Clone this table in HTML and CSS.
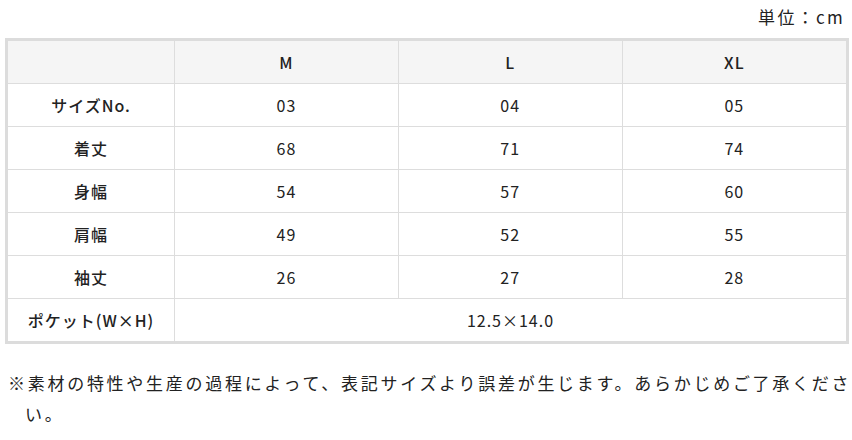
FILE: index.html
```html
<!DOCTYPE html>
<html lang="ja">
<head>
<meta charset="utf-8">
<link rel="stylesheet" href="styles.css">
</head>
<body>
<div class="page">
  <p class="unit">単位：cm</p>
  <div class="frame">
    <table class="size-table">
      <tr class="head">
        <td class="label"></td>
        <td>M</td>
        <td>L</td>
        <td>XL</td>
      </tr>
      <tr><td class="label">サイズNo.</td><td>03</td><td>04</td><td>05</td></tr>
      <tr><td class="label">着丈</td><td>68</td><td>71</td><td>74</td></tr>
      <tr><td class="label">身幅</td><td>54</td><td>57</td><td>60</td></tr>
      <tr><td class="label">肩幅</td><td>49</td><td>52</td><td>55</td></tr>
      <tr><td class="label">袖丈</td><td>26</td><td>27</td><td>28</td></tr>
      <tr class="last"><td class="label">ポケット(W×H)</td><td colspan="3">12.5×14.0</td></tr>
    </table>
  </div>
  <p class="note">※素材の特性や生産の過程によって、表記サイズより誤差が生じます。あらかじめご了承ください。</p>
</div>
</body>
</html>
```
FILE: styles.css
```css
html, body {
  margin: 0;
  padding: 0;
  background: #fff;
}
body {
  font-family: "Noto Sans CJK JP", "Noto Sans", sans-serif;
  color: #222;
}
.page {
  width: 852px;
}
.unit {
  margin: 0;
  height: 38px;
  padding: 2px 7px 0 0;
  box-sizing: border-box;
  text-align: right;
  font-size: 17px;
  line-height: 30px;
  letter-spacing: 2.3px;
}
.frame {
  margin: 0 3px 0 5px;
  border: 3px solid #dcdcdc;
}
.size-table {
  width: 100%;
  border-collapse: collapse;
  table-layout: fixed;
  font-size: 16px;
  letter-spacing: 1px;
}
.size-table td {
  border: 1px solid #dddddd;
  height: 42px;
  padding: 0;
  text-align: center;
  vertical-align: middle;
  line-height: 20px;
}
.size-table tr:first-child td { border-top: 0; }
.size-table tr:last-child td { border-bottom: 0; }
.size-table td:first-child { border-left: 0; }
.size-table td:last-child { border-right: 0; }
.size-table td.label {
  width: 166px;
  font-weight: 500;
}
.size-table .head td {
  background: #f5f5f5;
  font-weight: 500;
}
.note {
  margin: 23px 0 0 8px;
  width: 844px;
  padding-left: 17px;
  text-indent: -17px;
  box-sizing: border-box;
  font-size: 17px;
  line-height: 31px;
  letter-spacing: 2.72px;
}
```
